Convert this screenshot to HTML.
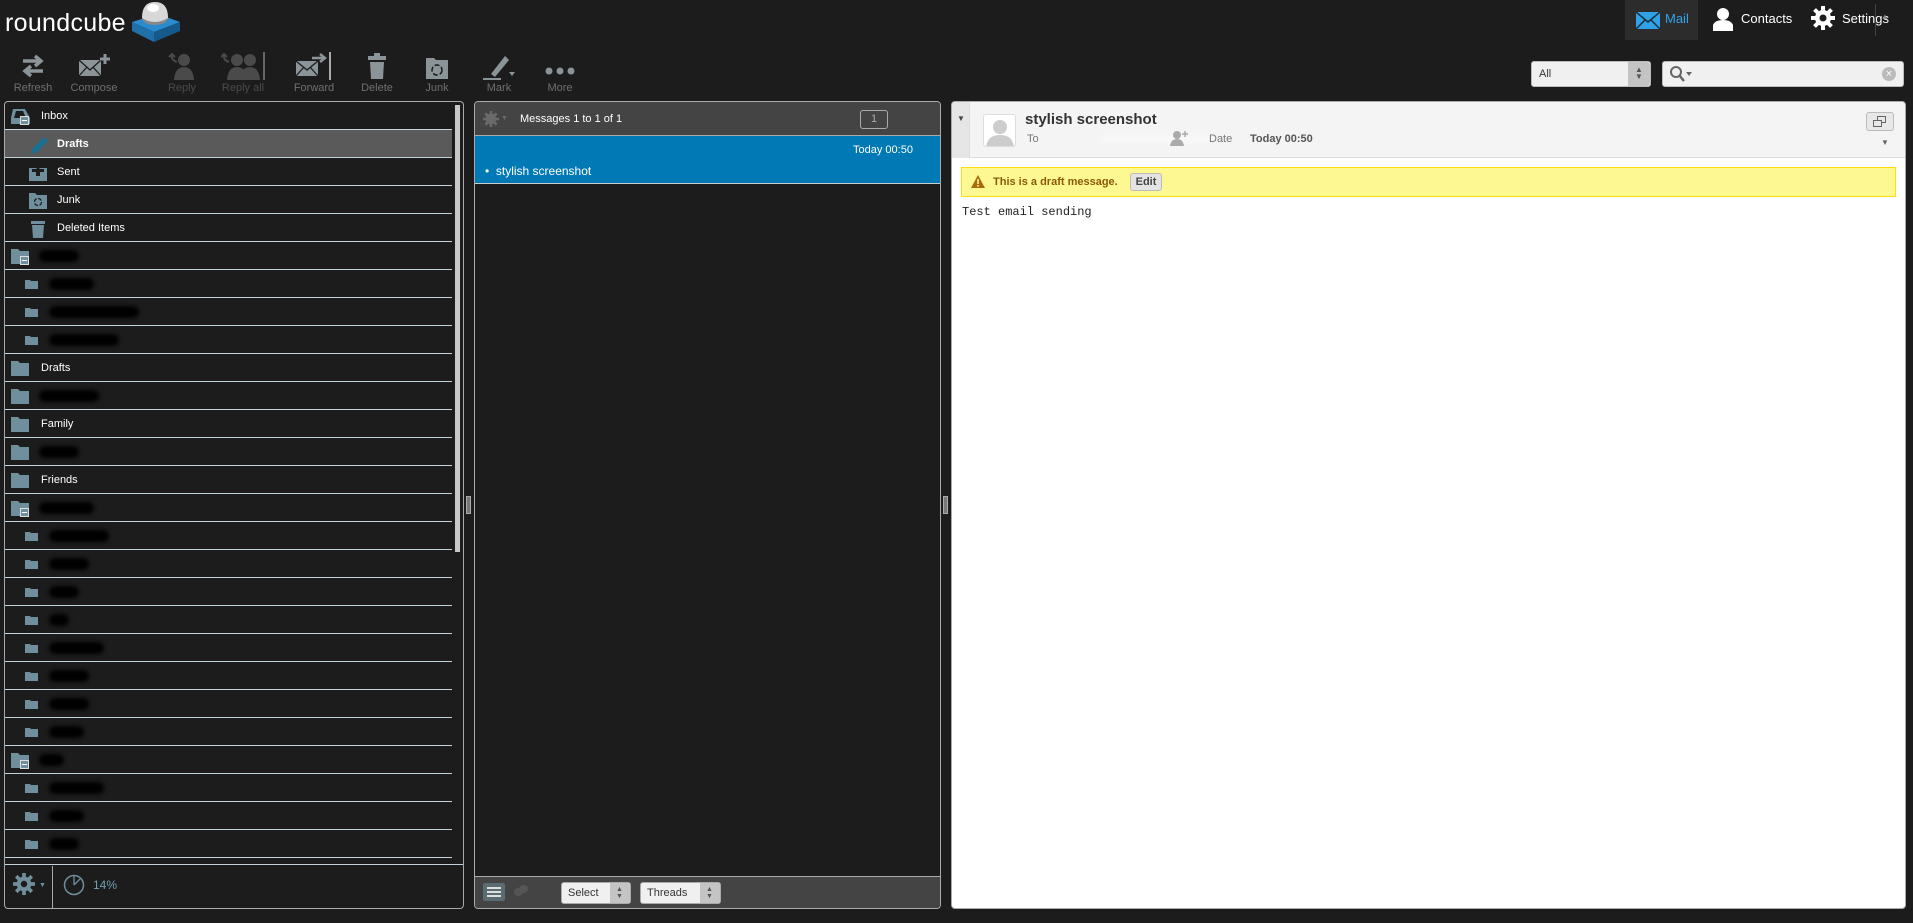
<!DOCTYPE html>
<html><head><meta charset="utf-8">
<style>
*{box-sizing:border-box;margin:0;padding:0}
body{width:1913px;height:923px;background:#1c1c1c;font-family:"Liberation Sans",sans-serif;position:relative;overflow:hidden;color:#fff}
.abs{position:absolute}
.tb{position:absolute;top:52px;width:70px;text-align:center;font-size:11px;color:#6f6f6f}
.tb svg{display:block;margin:0 auto 2px}
.tb.dis{color:#4a4a4a}
.row{position:absolute;left:5px;width:447px;height:28px;border-bottom:1px solid #c3d3da;font-size:11px;line-height:29px}
.row .t{position:absolute;left:36px}
.row.sub .t{left:52px}
.blur{position:absolute;top:8px;height:12px;background:#000;border-radius:6px;filter:blur(2px)}
.fi{position:absolute}
</style></head><body>

<!-- header -->
<div class="abs" style="left:5px;top:9px;font-size:25px;color:#fff;font-family:'Liberation Sans',sans-serif;letter-spacing:0.3px">roundcube</div>
<svg class="abs" style="left:128px;top:0" width="54" height="44" viewBox="0 0 54 44">
<polygon points="4,22 30,14 52,22 26,32" fill="#2a8ccf"/>
<polygon points="4,22 26,32 26,42 4,31" fill="#1f6fa8"/>
<polygon points="26,32 52,22 52,31 26,42" fill="#155a8a"/>
<ellipse cx="27" cy="18" rx="13" ry="7" fill="#888"/>
<path d="M14,18 Q14,2 27,2 Q40,2 40,18 Q27,26 14,18Z" fill="#d8d8d8"/>
<ellipse cx="25" cy="8" rx="6" ry="4" fill="#fff"/>
</svg>

<div class="abs" style="left:1625px;top:0;width:73px;height:40px;background:#2c2c2c"></div>
<svg class="abs" style="left:1636px;top:12px" width="24" height="17" viewBox="0 0 24 17"><rect x="0" y="0" width="24" height="17" fill="#2fa2e8"/><path d="M0,0 L12,10 L24,0 M0,17 L9,8 M24,17 L15,8" stroke="#1c2c38" stroke-width="1.5" fill="none"/></svg>
<div class="abs" style="left:1665px;top:11px;font-size:13px;color:#2fa2e8">Mail</div>
<svg class="abs" style="left:1713px;top:7px" width="20" height="24" viewBox="0 0 20 24"><circle cx="10" cy="7" r="6" fill="#fff"/><path d="M0,24 L0,18 Q2,13 10,13 Q18,13 20,18 L20,24Z" fill="#fff"/></svg>
<div class="abs" style="left:1741px;top:11px;font-size:13px;color:#fff">Contacts</div>
<svg class="abs" style="left:1811px;top:6px" width="24" height="24" viewBox="0 0 24 24"><g fill="#fff"><circle cx="12" cy="12" r="8"/><rect x="10" y="0" width="4" height="24"/><rect x="0" y="10" width="24" height="4"/><rect x="10" y="0" width="4" height="24" transform="rotate(45 12 12)"/><rect x="10" y="0" width="4" height="24" transform="rotate(-45 12 12)"/></g><circle cx="12" cy="12" r="3.5" fill="#1c1c1c"/></svg>
<div class="abs" style="left:1842px;top:11px;font-size:13px;color:#fff">Settings</div>
<div class="abs" style="left:1875px;top:4px;width:1px;height:32px;background:#444"></div>
<div class="abs" style="left:1881px;top:12px;font-size:8px;color:#888">▲</div>

<!-- toolbar -->
<div class="tb" style="left:-2px"><svg width="28" height="28" viewBox="0 0 28 28"><path d="M4,9 H20 M16,4 L22,9 L16,14 M24,19 H8 M12,14 L6,19 L12,24" stroke="#8a9499" stroke-width="3.5" fill="none"/></svg>Refresh</div>
<div class="tb" style="left:59px"><svg width="34" height="28" viewBox="0 0 34 28"><rect x="2" y="8" width="22" height="16" fill="#8a9499"/><path d="M2,8 L13,18 L24,8 M2,24 L10,15 M24,24 L16,15" stroke="#1c1c1c" stroke-width="1.3" fill="none"/><path d="M28,2 V12 M23,7 H33" stroke="#8a9499" stroke-width="3"/></svg>Compose</div>
<div class="tb dis" style="left:147px"><svg width="30" height="28" viewBox="0 0 30 28"><circle cx="17" cy="8" r="6" fill="#4a4a4a"/><path d="M7,28 Q8,15 17,15 Q26,15 27,28Z" fill="#4a4a4a"/><path d="M10,10 Q4,8 5,3 M2,5 L5,2 L8,5" stroke="#4a4a4a" stroke-width="2" fill="none"/></svg>Reply</div>
<div class="tb dis" style="left:208px"><svg width="44" height="28" viewBox="0 0 44 28"><circle cx="16" cy="8" r="6" fill="#4a4a4a"/><circle cx="29" cy="8" r="6" fill="#4a4a4a"/><path d="M6,28 Q7,15 16,15 Q25,15 26,28Z M19,28 Q20,15 29,15 Q38,15 39,28Z" fill="#4a4a4a"/><path d="M8,10 Q2,8 3,3 M0,5 L3,2 L6,5" stroke="#4a4a4a" stroke-width="2" fill="none"/><rect x="42" y="0" width="2" height="28" fill="#666"/></svg>Reply all</div>
<div class="tb" style="left:279px"><svg width="40" height="28" viewBox="0 0 40 28"><rect x="2" y="9" width="22" height="15" fill="#8a9499"/><path d="M2,9 L13,18 L24,9 M2,24 L10,15 M24,24 L16,15" stroke="#1c1c1c" stroke-width="1.3" fill="none"/><path d="M18,6 H30 M26,2 L31,6 L26,10" stroke="#8a9499" stroke-width="2.5" fill="none"/><rect x="35" y="0" width="2" height="28" fill="#aaa"/></svg>Forward</div>
<div class="tb" style="left:342px"><svg width="24" height="28" viewBox="0 0 24 28"><rect x="3" y="4" width="18" height="4" fill="#8a9499"/><rect x="9" y="1" width="6" height="3" fill="#8a9499"/><path d="M5,10 H19 L18,27 H6Z" fill="#8a9499"/></svg>Delete</div>
<div class="tb" style="left:402px"><svg width="26" height="28" viewBox="0 0 26 28"><path d="M2,6 H10 L12,8 H24 V27 H2Z" fill="#8a9499"/><circle cx="13" cy="18" r="5" fill="none" stroke="#1c1c1c" stroke-width="1.5" stroke-dasharray="5 2"/></svg>Junk</div>
<div class="tb" style="left:464px"><svg width="40" height="28" viewBox="0 0 40 28"><path d="M12,22 L26,4 L30,8 L16,25Z" fill="#8a9499"/><path d="M4,27 H22" stroke="#8a9499" stroke-width="2"/><path d="M30,20 L36,20 L33,24Z" fill="#8a9499"/></svg>Mark</div>
<div class="tb" style="left:525px"><svg width="34" height="28" viewBox="0 0 34 28"><circle cx="6" cy="19" r="3.5" fill="#8a9499"/><circle cx="17" cy="19" r="3.5" fill="#8a9499"/><circle cx="28" cy="19" r="3.5" fill="#8a9499"/></svg>More</div>

<!-- filter/search -->
<div class="abs" style="left:1531px;top:61px;width:120px;height:26px;background:#f0f0f0;border-radius:3px;border:1px solid #bbb"></div>
<div class="abs" style="left:1628px;top:62px;width:22px;height:24px;background:#c4c4c4;border-radius:0 3px 3px 0"></div>
<div class="abs" style="left:1635px;top:66px;font-size:8px;color:#555;line-height:7px">▲<br>▼</div>
<div class="abs" style="left:1539px;top:68px;font-size:11px;color:#333">All</div>
<div class="abs" style="left:1662px;top:61px;width:242px;height:26px;background:#f0f0f0;border-radius:3px;border:1px solid #bbb"></div>
<svg class="abs" style="left:1669px;top:65px" width="24" height="18" viewBox="0 0 24 18"><circle cx="7" cy="7" r="5" fill="none" stroke="#666" stroke-width="2"/><path d="M10,10 L15,16" stroke="#666" stroke-width="2.5"/><path d="M17,7 L23,7 L20,11Z" fill="#666"/></svg>
<div class="abs" style="left:1882px;top:67px;width:14px;height:14px;border-radius:50%;background:#bbb;color:#fff;font-size:11px;text-align:center;line-height:14px">×</div>

<!-- left panel -->
<div class="abs" style="left:4px;top:101px;width:460px;height:808px;border:1px solid #aaa;border-radius:4px"></div>
<div class="abs" style="left:455px;top:105px;width:5px;height:447px;background:#c8c8c8"></div>
<div id="folders"></div>
<div class="abs" style="left:5px;top:864px;width:458px;height:1px;background:#c3d3da"></div>
<div class="abs" style="left:5px;top:857px;width:446px;height:1px;background:#c3d3da"></div>
<svg class="abs" style="left:13px;top:873px" width="22" height="22" viewBox="0 0 24 24"><g fill="#6f8f9c"><circle cx="12" cy="12" r="8"/><rect x="10" y="0" width="4" height="24"/><rect x="0" y="10" width="24" height="4"/><rect x="10" y="0" width="4" height="24" transform="rotate(45 12 12)"/><rect x="10" y="0" width="4" height="24" transform="rotate(-45 12 12)"/></g><circle cx="12" cy="12" r="3.5" fill="#1c1c1c"/></svg>
<div class="abs" style="left:39px;top:882px;font-size:7px;color:#6f8f9c">▼</div>
<div class="abs" style="left:52px;top:866px;width:1px;height:42px;background:#aaa"></div>
<svg class="abs" style="left:63px;top:874px" width="22" height="22"><circle cx="11" cy="11" r="9.5" fill="none" stroke="#6f8f9c" stroke-width="1.5"/><path d="M11,11 V2 M11,11 L17,5" stroke="#6f8f9c" stroke-width="1.3"/></svg>
<div class="abs" style="left:93px;top:878px;font-size:12px;color:#6f9fb0">14%</div>

<!-- splitters -->
<div class="abs" style="left:466px;top:496px;width:5px;height:18px;border:1px solid #aaa;background:#777"></div>
<div class="abs" style="left:943px;top:496px;width:5px;height:18px;border:1px solid #aaa;background:#777"></div>

<!-- middle panel -->
<div class="abs" style="left:474px;top:101px;width:467px;height:808px;border:1px solid #aaa;border-radius:4px;overflow:hidden">
 <div class="abs" style="left:0;top:0;width:465px;height:34px;background:#444;border-bottom:1px solid #aaa"></div>
 <svg class="abs" style="left:8px;top:9px" width="16" height="16" viewBox="0 0 24 24"><g fill="#6a6a6a"><circle cx="12" cy="12" r="8"/><rect x="10" y="0" width="4" height="24"/><rect x="0" y="10" width="24" height="4"/><rect x="10" y="0" width="4" height="24" transform="rotate(45 12 12)"/><rect x="10" y="0" width="4" height="24" transform="rotate(-45 12 12)"/></g></svg>
 <div class="abs" style="left:26px;top:13px;font-size:7px;color:#6a6a6a">▼</div>
 <div class="abs" style="left:45px;top:11px;font-size:11px;color:#fff">Messages 1 to 1 of 1</div>
 <div class="abs" style="left:385px;top:8px;width:28px;height:19px;border:1px solid #aaa;border-radius:3px;font-size:11px;color:#aaa;text-align:center;line-height:17px">1</div>
 <div class="abs" style="left:0;top:34px;width:465px;height:48px;background:#0079b4;border-bottom:1px solid #ccc"></div>
 <div class="abs" style="left:378px;top:42px;font-size:11px;color:#fff">Today 00:50</div>
 <div class="abs" style="left:10px;top:62px;font-size:12px;color:#fff">•&nbsp;&nbsp;stylish screenshot</div>
 <div class="abs" style="left:0;top:774px;width:465px;height:32px;background:#444;border-top:1px solid #aaa"></div>
 <div class="abs" style="left:8px;top:781px;width:22px;height:18px;background:#5b6b72;border-radius:2px"></div>
 <div class="abs" style="left:12px;top:785px;width:14px;height:2px;background:#ddd;box-shadow:0 4px 0 #ddd,0 8px 0 #ddd"></div>
 <div class="abs" style="left:39px;top:786px;width:9px;height:8px;border-radius:50%;background:#555;box-shadow:5px -3px 0 #555"></div>
 <div class="abs" style="left:86px;top:780px;width:70px;height:22px;background:#f0f0f0;border-radius:3px;border:1px solid #aaa;font-size:11px;color:#333;line-height:20px;padding-left:6px">Select</div>
 <div class="abs" style="left:135px;top:781px;width:20px;height:20px;background:#c4c4c4"></div>
 <div class="abs" style="left:141px;top:784px;font-size:7px;color:#555;line-height:7px">▲<br>▼</div>
 <div class="abs" style="left:165px;top:780px;width:81px;height:22px;background:#f0f0f0;border-radius:3px;border:1px solid #aaa;font-size:11px;color:#333;line-height:20px;padding-left:6px">Threads</div>
 <div class="abs" style="left:225px;top:781px;width:20px;height:20px;background:#c4c4c4"></div>
 <div class="abs" style="left:231px;top:784px;font-size:7px;color:#555;line-height:7px">▲<br>▼</div>
</div>

<!-- right panel -->
<div class="abs" style="left:951px;top:101px;width:955px;height:808px;background:#fff;border:1px solid #aaa;border-radius:4px;overflow:hidden">
 <div class="abs" style="left:0;top:0;width:955px;height:56px;background:#f4f4f4;border-bottom:1px solid #ddd"></div>
 <div class="abs" style="left:0;top:0;width:18px;height:56px;background:#e6e6e6;border-right:1px solid #ddd"></div>
 <div class="abs" style="left:5px;top:12px;font-size:8px;color:#444">▼</div>
 <div class="abs" style="left:31px;top:12px;width:33px;height:33px;background:#fff;border:1px solid #ddd;border-radius:3px;overflow:hidden">
  <svg width="33" height="33"><circle cx="16" cy="12" r="7" fill="#ccc"/><path d="M2,33 Q3,20 16,20 Q29,20 30,33Z" fill="#ccc"/></svg></div>
 <div class="abs" style="left:73px;top:9px;font-size:15px;font-weight:bold;color:#333">stylish screenshot</div>
 <div class="abs" style="left:75px;top:31px;font-size:11px;color:#777">To</div>
 <div class="abs" style="left:150px;top:33px;width:110px;height:8px;background:#f8f8f8;filter:blur(2px)"></div>
 <svg class="abs" style="left:218px;top:28px" width="18" height="16"><circle cx="7" cy="5" r="4" fill="#aaa"/><path d="M0,16 Q1,9 7,9 Q13,9 14,16Z" fill="#aaa"/><path d="M15,1 V7 M12,4 H18" stroke="#aaa" stroke-width="1.5"/></svg>
 <div class="abs" style="left:257px;top:31px;font-size:11px;color:#777">Date</div>
 <div class="abs" style="left:298px;top:31px;font-size:11px;color:#555;font-weight:bold">Today 00:50</div>
 <div class="abs" style="left:914px;top:10px;width:28px;height:19px;background:#e8e8e8;border:1px solid #bbb;border-radius:3px"></div>
 <div class="abs" style="left:925px;top:14px;width:9px;height:7px;border:1.5px solid #666"></div>
 <div class="abs" style="left:921px;top:18px;width:9px;height:7px;border:1.5px solid #666;background:#e8e8e8"></div>
 <div class="abs" style="left:929px;top:36px;font-size:8px;color:#666">▼</div>
 <div class="abs" style="left:9px;top:65px;width:935px;height:30px;background:#fef893;border:1px solid #ffdf0e"></div>
 <svg class="abs" style="left:18px;top:72px" width="16" height="15"><path d="M8,1 L15,14 H1Z" fill="#a86c0a"/><rect x="7.2" y="5" width="1.6" height="5" fill="#fef893"/><rect x="7.2" y="11" width="1.6" height="1.6" fill="#fef893"/></svg>
 <div class="abs" style="left:41px;top:74px;font-size:11px;font-weight:bold;color:#8a5a0a">This is a draft message.</div>
 <div class="abs" style="left:178px;top:71px;width:32px;height:18px;background:#e4e4e4;border:1px solid #bbb;border-radius:3px;font-size:11px;font-weight:bold;color:#444;text-align:center;line-height:16px">Edit</div>
 <div class="abs" style="left:10px;top:103px;font-size:12px;color:#222;font-family:'Liberation Mono','DejaVu Sans Mono',monospace">Test email sending</div>
</div>

<script>
var rows=[
['Inbox',0,'inbox',0],['Drafts',1,'pencil',0,1],['Sent',1,'sent',0],['Junk',1,'junk',0],['Deleted Items',1,'trash',0],
[40,0,'folder',1,0,1],[45,1,'small',1],[90,1,'small',1],[70,1,'small',1],
['Drafts',0,'folder',0],[60,0,'folder',1],['Family',0,'folder',0],[40,0,'folder',1],['Friends',0,'folder',0],
[55,0,'folder',1,0,1],[60,1,'small',1],[40,1,'small',1],[30,1,'small',1],[20,1,'small',1],[55,1,'small',1],[40,1,'small',1],[40,1,'small',1],[35,1,'small',1],
[25,0,'folder',1,0,1],[55,1,'small',1],[35,1,'small',1],[30,1,'small',1]];
var h='';
var col='#6f8f9c';
function icon(k,x){
 var s='<svg class="fi" style="left:'+x+'px;top:4px" width="26" height="22" viewBox="0 0 26 22">';
 if(k=='inbox')s+='<path d="M3,3 H15 L20,12 V18 H1 V12Z" fill="'+col+'"/><path d="M4,12 L6,5 H13 L16,12Z" fill="#1c1c1c"/>';
 if(k=='pencil')s+='<path d="M4,20 L6,14 L17,3 L21,7 L10,18Z" fill="#1a6f94"/>';
 if(k=='sent')s+='<path d="M2,6 H20 V19 H2Z" fill="'+col+'"/><path d="M5,10 V7 H17 V10" fill="#1c1c1c"/><path d="M11,5 L16,10 H13 V14 H9 V10 H6Z" fill="#1c1c1c"/>';
 if(k=='junk')s+='<path d="M2,3 H8 L10,5 H20 V19 H2Z" fill="'+col+'"/><circle cx="11" cy="12" r="3.5" fill="none" stroke="#1c1c1c" stroke-width="1.3" stroke-dasharray="4 1.5"/>';
 if(k=='trash')s+='<rect x="4" y="3" width="14" height="3" fill="'+col+'"/><path d="M5,7 H17 L16,20 H6Z" fill="'+col+'"/>';
 if(k=='folder')s+='<path d="M1,3 H8 L10,5 H19 V18 H1Z" fill="'+col+'"/>';
 if(k=='small')s+='<path d="M3,6 H8 L9,7 H16 V15 H3Z" fill="'+col+'"/>';
 return s+'</svg>';
}
for(var i=0;i<rows.length;i++){
 var r=rows[i],ty=102+i*28;
 var bg=r[4]?'background:#5a5a5a;':'';
 h+='<div class="row'+(r[1]?' sub':'')+'" style="top:'+ty+'px;'+bg+'">';
 var ix=r[1]?(r[2]=='small'?17:22):5;
 h+=icon(r[2],ix);
 if(r[0]=='Inbox'||r[5])h+='<div class="fi" style="left:'+(ix+10)+'px;top:14px;width:9px;height:9px;background:#6f8f9c;border:1px solid #ddd;"><div style="margin:3px 1px;height:1px;background:#fff"></div></div>';
 if(r[3])h+='<div class="blur" style="left:'+(r[1]?44:34)+'px;width:'+r[0]+'px"></div>';
 else h+='<div class="t" style="'+(r[4]?'font-weight:bold;':'')+'">'+r[0]+'</div>';
 h+='</div>';
}
document.getElementById('folders').innerHTML=h;
</script>
</body></html>
